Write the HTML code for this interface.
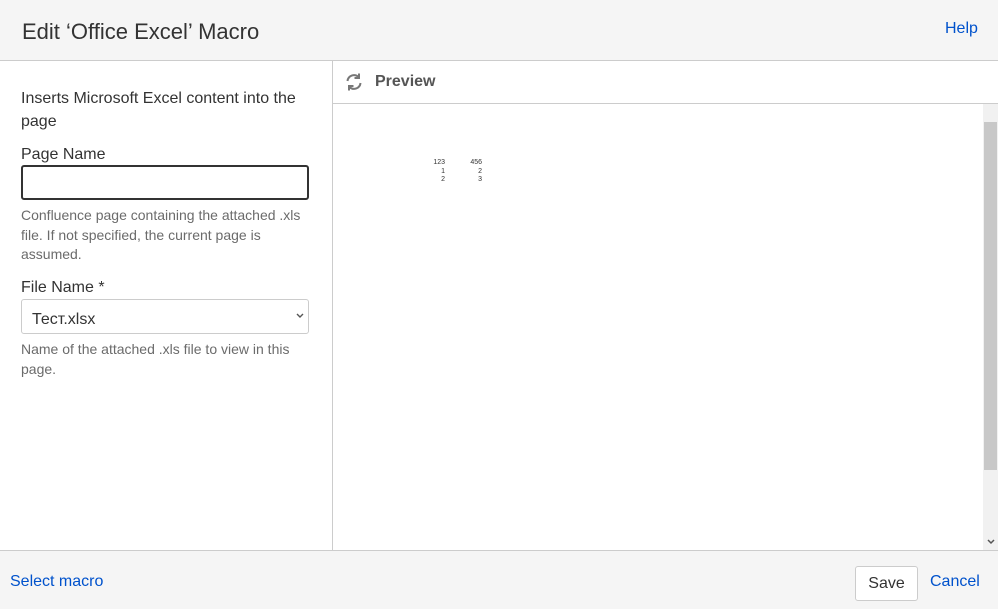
<!DOCTYPE html><html><head><style>
body{margin:0;width:998px;height:608px;background:#fff;font-family:"Liberation Sans",sans-serif;position:relative;overflow:hidden;color:#333}
.hdr{position:absolute;left:0;top:0;width:998px;height:60px;background:#f5f5f5;border-bottom:1px solid #ccc}
.ftr{position:absolute;left:0;top:550px;width:998px;height:58px;background:#f5f5f5;border-top:1px solid #ccc}
a{color:#0052cc;text-decoration:none}
.ab{position:absolute}
.d{font-size:14px;color:#6b6b6b;line-height:19.5px}
.n{position:absolute;font-size:7px;text-align:right;line-height:8.5px;color:#333}
</style></head><body>
<div class="hdr"><div class="ab" style="left:22px;top:19px;font-size:22px;color:#333">Edit ‘Office Excel’ Macro</div>
<a class="ab" style="left:945px;top:20px;font-size:16px">Help</a></div>
<div class="ab" style="left:332px;top:61px;width:1px;height:489px;background:#ccc"></div>
<div class="ab" style="left:21px;top:87px;font-size:16px;line-height:23px;width:300px;color:#333">Inserts Microsoft Excel content into the page</div>
<div class="ab" style="left:21px;top:146px;font-size:16px">Page Name</div>
<div style="position:absolute;left:21px;top:165px;width:284px;height:31px;border:2px solid #333;border-radius:3px"></div>
<div class="ab d" style="left:21px;top:206px;width:290px">Confluence page containing the attached .xls file. If not specified, the current page is assumed.</div>
<div class="ab" style="left:21px;top:279px;font-size:16px">File Name *</div>
<div style="position:absolute;left:21px;top:299px;width:286px;height:33px;border:1px solid #ccc;border-radius:3px"></div>
<div class="ab" style="left:32px;top:311px;font-size:16px">Тест.xlsx</div>
<svg class="ab" style="left:296px;top:313px" width="8" height="6" viewBox="0 0 8 6"><path d="M1 1l3 3 3-3" fill="none" stroke="#555" stroke-width="1.4"/></svg>
<div class="ab d" style="left:21px;top:340px;width:290px">Name of the attached .xls file to view in this page.</div>
<svg class="ab" style="left:344px;top:72px" width="20" height="20" viewBox="0 0 20 20" fill="none" stroke="#777" stroke-width="2"><path d="M3.5 9a6.5 6.5 0 0 1 11-4M16.5 11a6.5 6.5 0 0 1-11 4"/><path d="M15 1.5v4.5h-4.5M5 18.5v-4.5h4.5"/></svg>
<div class="ab" style="left:375px;top:73px;font-size:16px;font-weight:bold;color:#555">Preview</div>
<div class="ab" style="left:333px;top:103px;width:665px;height:1px;background:#ccc"></div>
<div class="n" style="left:425px;top:159px;width:20px">123<br>1<br>2</div>
<div class="n" style="left:462px;top:159px;width:20px">456<br>2<br>3</div>
<div class="ab" style="left:983px;top:104px;width:15px;height:446px;background:#f1f1f1"></div>
<div class="ab" style="left:984px;top:122px;width:13px;height:348px;background:#c8c8c8"></div>
<svg class="ab" style="left:987px;top:539px" width="8" height="6" viewBox="0 0 8 6"><path d="M1 1l3 3 3-3" fill="none" stroke="#555" stroke-width="1.5"/></svg>
<div class="ftr"><a class="ab" style="left:10px;top:22px;font-size:16px">Select macro</a>
<div class="ab" style="left:855px;top:15px;width:61px;height:33px;border:1px solid #ccc;border-radius:3px;background:#fff;font-size:16px;text-align:center;line-height:33px;color:#333">Save</div>
<a class="ab" style="left:930px;top:22px;font-size:16px">Cancel</a></div>
</body></html>
